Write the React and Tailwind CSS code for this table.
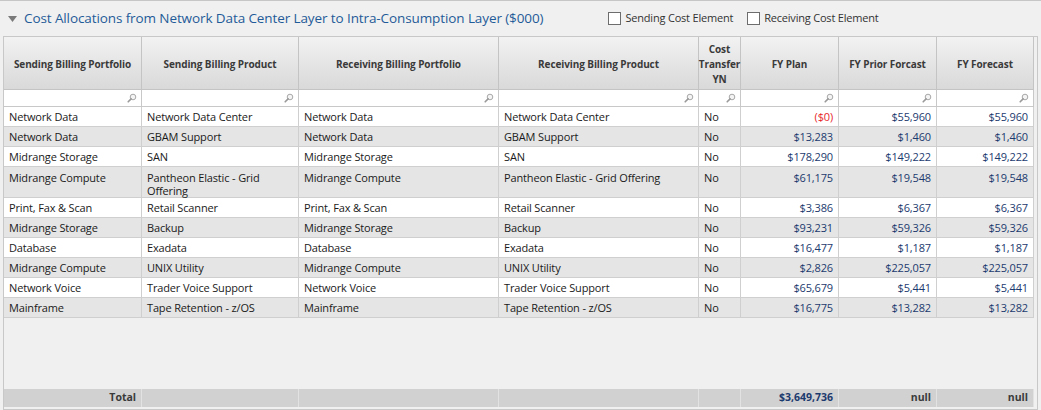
import React from "react";

const cols = "grid-cols-[138px_157px_200px_200px_42px_98px_98px_97px]";

const rows = [
  ["Network Data", "Network Data Center", "Network Data", "Network Data Center", "No", "($0)", "$55,960", "$55,960"],
  ["Network Data", "GBAM Support", "Network Data", "GBAM Support", "No", "$13,283", "$1,460", "$1,460"],
  ["Midrange Storage", "SAN", "Midrange Storage", "SAN", "No", "$178,290", "$149,222", "$149,222"],
  ["Midrange Compute", "Pantheon Elastic - Grid Offering", "Midrange Compute", "Pantheon Elastic - Grid Offering", "No", "$61,175", "$19,548", "$19,548"],
  ["Print, Fax & Scan", "Retail Scanner", "Print, Fax & Scan", "Retail Scanner", "No", "$3,386", "$6,367", "$6,367"],
  ["Midrange Storage", "Backup", "Midrange Storage", "Backup", "No", "$93,231", "$59,326", "$59,326"],
  ["Database", "Exadata", "Database", "Exadata", "No", "$16,477", "$1,187", "$1,187"],
  ["Midrange Compute", "UNIX Utility", "Midrange Compute", "UNIX Utility", "No", "$2,826", "$225,057", "$225,057"],
  ["Network Voice", "Trader Voice Support", "Network Voice", "Trader Voice Support", "No", "$65,679", "$5,441", "$5,441"],
  ["Mainframe", "Tape Retention - z/OS", "Mainframe", "Tape Retention - z/OS", "No", "$16,775", "$13,282", "$13,282"],
];

const headers = [
  "Sending Billing Portfolio",
  "Sending Billing Product",
  "Receiving Billing Portfolio",
  "Receiving Billing Product",
  "Cost Transfer YN",
  "FY Plan",
  "FY Prior Forcast",
  "FY Forecast",
];

const Search = () => (
  <svg width="10" height="10" viewBox="0 0 10 10" className="shrink-0">
    <circle cx="6" cy="4" r="2.8" fill="#f4f4f4" stroke="#a8a8a8" strokeWidth="1" />
    <path d="M4.1 5.9 L1.2 8.8" stroke="#9a9a9a" strokeWidth="1.6" strokeLinecap="round" />
  </svg>
);

const Checkbox = ({ label }) => (
  <label className="flex items-center gap-[4px] text-[11px] tracking-[-0.2px] text-[#333]">
    <span className="w-[13px] h-[13px] border border-[#6d6d6d] bg-white" />
    {label}
  </label>
);

const App = () => {
  return (
    <div
      className="w-[1041px] h-[410px] bg-[#f0f0f0] border-t border-[#c6c6c6] overflow-hidden"
      style={{ fontFamily: '"Open Sans", "Noto Sans", sans-serif' }}
    >
      {/* title bar */}
      <div className="h-[35px] flex items-center pl-[8px]">
        <svg width="9" height="6" viewBox="0 0 9 6" className="mr-[7px]">
          <path d="M0 0 H9 L4.5 6 Z" fill="#7a7a7a" />
        </svg>
        <span className="text-[13.5px] text-[#1f5b98] tracking-[-0.1px]">
          Cost Allocations from Network Data Center Layer to Intra-Consumption Layer ($000)
        </span>
        <div className="flex items-center gap-[14px] ml-[65px]">
          <Checkbox label="Sending Cost Element" />
          <Checkbox label="Receiving Cost Element" />
        </div>
      </div>

      {/* grid frame */}
      <div className="ml-[3px] w-[1035px] h-[374px] border border-[#c8c8c8] flex flex-col bg-[#f0f0f0]">
        <div className="w-[1030px] flex flex-col">
          {/* header */}
          <div className={`grid ${cols} h-[53px]`}>
            {headers.map((h, i) => (
              <div
                key={i}
                className="flex items-center justify-center text-center px-[2px] pt-[2px] text-[10px] font-bold leading-[15px] tracking-[-0.1px] text-[#3a3a3a] bg-gradient-to-b from-[#f2f2f2] to-[#d9d9d9] border-r border-b border-[#c4c4c4]"
              >
                {i === 4 ? (
                  <span>
                    Cost
                    <br />
                    Transfer
                    <br />
                    YN
                  </span>
                ) : (
                  h
                )}
              </div>
            ))}
          </div>
          {/* filter row */}
          <div className={`grid ${cols} h-[17px]`}>
            {headers.map((h, i) => (
              <div
                key={i}
                className="bg-white border-r border-b border-[#c8c8c8] flex items-center justify-end pr-[4px]"
              >
                <Search />
              </div>
            ))}
          </div>
          {/* data rows */}
          {rows.map((r, ri) => (
            <div
              key={ri}
              className={`grid ${cols} ${ri === 3 ? "h-[31px]" : "h-[20px]"} ${
                ri % 2 === 0 ? "bg-white" : "bg-[#e5e5e5]"
              }`}
            >
              {r.map((c, ci) => (
                <div
                  key={ci}
                  className={`border-r border-b border-[#cfcfcf] px-[5px] text-[11px] tracking-[-0.15px] leading-[13px] text-[#1a1a1a] ${
                    ri === 3 ? "pt-[4px]" : "flex items-center"
                  } ${ci >= 5 ? "justify-end text-right text-[#1c3a6e]" : ""} ${
                    ci === 5 && ri === 0 ? "text-[#e8252b]" : ""
                  }`}
                >
                  {c}
                </div>
              ))}
            </div>
          ))}
        </div>
        <div className="flex-1" />
        {/* total row */}
        <div className={`grid ${cols} h-[18px] w-[1030px] bg-[#d1d1d1] mb-[2px]`}>
          {headers.map((h, i) => (
            <div
              key={i}
              className={`border-r border-[#e2e2e2] px-[5px] flex items-center justify-end text-[10.5px] font-bold ${
                i === 5 ? "text-[#1c3a6e]" : "text-[#3a3a3a]"
              }`}
            >
              {i === 0 ? "Total" : i === 5 ? "$3,649,736" : i >= 6 ? "null" : ""}
            </div>
          ))}
        </div>
      </div>
    </div>
  );
};

export default App;
